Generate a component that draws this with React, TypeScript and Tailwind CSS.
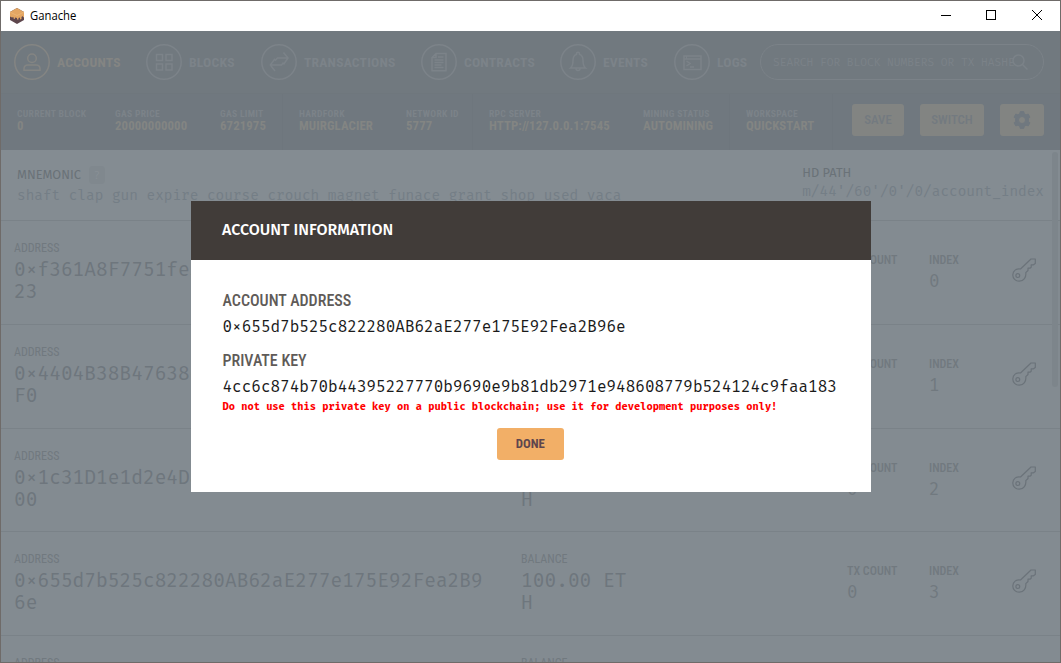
import type { ReactNode } from 'react';
import { clsx } from 'clsx';

interface NavItem {
  label: string;
  icon: ReactNode;
  width: string;
  active?: boolean;
}

interface Account {
  address: string;
  index: number;
  height: string;
}

const condensed = "font-['Roboto_Condensed','Roboto',sans-serif] [font-stretch:75%]";
const mono = "font-['Fira_Mono','Liberation_Mono',monospace]";
const sans = "font-['Fira_Sans','Open_Sans',sans-serif]";

const navItems: NavItem[] = [
  {
    label: 'ACCOUNTS',
    width: 'w-[132px]',
    active: true,
    icon: (
      <>
        <circle cx="18" cy="14.3" r="4.3" />
        <path d="M10 26.2v-1.4c0-2.4 1.6-3.8 4-3.8h8c2.4 0 4 1.4 4 3.8v1.4z" />
      </>
    ),
  },
  {
    label: 'BLOCKS',
    width: 'w-[115px]',
    icon: (
      <>
        <rect x="10.5" y="10.5" width="6" height="6" />
        <rect x="20" y="10.5" width="6" height="6" />
        <rect x="10.5" y="20" width="6" height="6" />
        <rect x="20" y="20" width="6" height="6" />
      </>
    ),
  },
  {
    label: 'TRANSACTIONS',
    width: 'w-[160px]',
    icon: <path d="M22.5 8.5L27 14l-4.5 6.5M27 14H16.5L14 16.7M14 14.7L9.3 21l4.7 6M9.3 21h11.2l2-2.5" />,
  },
  {
    label: 'CONTRACTS',
    width: 'w-[139px]',
    icon: <path d="M11 13.5v13.2h14V9.5H15zM11 13.5h4v-4M13.5 16h9M13.5 18.5h9M13.5 21h7M13.5 23.5h9M17 13h5.5" />,
  },
  {
    label: 'EVENTS',
    width: 'w-[114px]',
    icon: <path d="M10.5 24c2.5-2 2.5-4 2.5-7.5 0-3.5 1.5-5.5 3.5-6v-1c0-1.6 3-1.6 3 0v1c2 .5 3.5 2.5 3.5 6 0 3.5 0 5.5 2.5 7.5zM16 24.5c0 2.7 4 2.7 4 0" />,
  },
  {
    label: 'LOGS',
    width: 'w-[86px]',
    icon: <path d="M10 12h17v13.5H10zM10 15h17M12 13.5h1M12.5 17l3.5 2.5-3.5 2.5M16 23h4" />,
  },
];

const stats = [
  { label: 'CURRENT BLOCK', value: '0', width: 'w-[98px]' },
  { label: 'GAS PRICE', value: '20000000000', width: 'w-[105px]' },
  { label: 'GAS LIMIT', value: '6721975', width: 'w-[79px]', border: true },
  { label: 'HARDFORK', value: 'MUIRGLACIER', width: 'w-[107px]' },
  { label: 'NETWORK ID', value: '5777', width: 'w-[83px]', border: true },
  { label: 'RPC SERVER', value: 'HTTP://127.0.0.1:7545', width: 'w-[154px]' },
  { label: 'MINING STATUS', value: 'AUTOMINING', width: 'w-[103px]', border: true },
  { label: 'WORKSPACE', value: 'QUICKSTART', width: 'w-[103px]', border: true },
];

const accounts: Account[] = [
  { address: '0×f361A8F7751fe3a2B4c8E9d0176fAb52cD84E123', index: 0, height: 'h-[104px]' },
  { address: '0×4404B38B47638e5dA1c7F90b32E64aD8c15Be9F0', index: 1, height: 'h-[104px]' },
  { address: '0×1c31D1e1d2e4D8b7F05a93Ec6142dB78fA90c300', index: 2, height: 'h-[103px]' },
  { address: '0×655d7b525c822280AB62aE277e175E92Fea2B96e', index: 3, height: 'h-[104px]' },
  { address: '', index: 4, height: 'h-[104px]' },
];

function GanacheLogo() {
  return (
    <svg viewBox="0 0 14 16" className="h-4 w-3.5">
      <path d="M7 0l7 4v8l-7 4-7-4V4z" fill="#5e464d" />
      <path d="M7 0l7 4v5l-1 .5V8l-1.5 1v2l-1.5.5V9.5L8.5 10v1.5H7V10L5 9.500v1.500L3.500 10.500V9L2 9.500 0 8.500V4z" fill="#e4a663" />
      <path d="M0 4l7 3.5L14 4" fill="none" stroke="#f0bd80" strokeWidth=".6" />
    </svg>
  );
}

function TitleBar() {
  return (
    <div className="flex h-[30px] shrink-0 items-center bg-white pl-[9px] text-black">
      <GanacheLogo />
      <span className="ml-1.5 origin-left scale-x-[0.94] font-['Open_Sans',sans-serif] text-[12px]">Ganache</span>
      <svg className="-mr-px ml-auto h-[30px] w-[120px]" viewBox="0 0 120 30" fill="none" stroke="currentColor" shapeRendering="crispEdges">
        <path d="M0 14.5h10M45.5 9.5h9v9h-9z" />
        <path d="M91 9l10 10M101 9L91 19" shapeRendering="auto" />
      </svg>
    </div>
  );
}

function NavBar() {
  return (
    <nav className="flex h-[62px] items-center pl-[13px] pr-4">
      {navItems.map((item) => (
        <div
          key={item.label}
          className={clsx('flex shrink-0 items-center gap-[7px]', item.width, item.active ? 'text-[#848583]' : 'text-[#7c8389]')}
        >
          <svg viewBox="0 0 36 36" className="size-9 shrink-0" fill="none" stroke="currentColor" strokeWidth="1.5">
            <circle cx="18" cy="18" r="17.2" />
            {item.icon}
          </svg>
          <span className={clsx(condensed, 'text-[13.6px] font-bold tracking-[0.2px] whitespace-nowrap')}>{item.label}</span>
        </div>
      ))}
      <div className="flex h-9 min-w-0 flex-1 items-center rounded-full border border-[#7b8288] pl-3 text-[#7b8288]">
        <span className={clsx(mono, 'w-[241px] shrink-0 overflow-hidden pt-0.5 text-[11.2px] whitespace-nowrap')}>
          SEARCH FOR BLOCK NUMBERS OR TX HASHES
        </span>
        <svg viewBox="0 0 16 16" className="-ml-[2px] size-4 shrink-0" fill="none" stroke="currentColor" strokeWidth="1.5">
          <circle cx="6.5" cy="6.5" r="5.5" />
          <path d="M10.5 10.5l5 5" />
        </svg>
      </div>
    </nav>
  );
}

function ToolbarButton({ className, children }: { className: string; children: ReactNode }) {
  return (
    <button
      className={clsx(condensed, 'flex h-8 items-center justify-center rounded-[3px] bg-[#828482] text-[12.8px] font-medium text-[#737a80]', className)}
    >
      {children}
    </button>
  );
}

function StatusBar() {
  return (
    <div className="flex h-[57px] border-t border-[#6f777d] bg-[#70787f] pr-4">
      {stats.map((stat) => (
        <div
          key={stat.label}
          className={clsx(condensed, 'shrink-0 pt-3.5 pl-4 font-bold whitespace-nowrap', stat.width, stat.border && 'border-r border-[#6e767d]')}
        >
          <div className="text-[9.6px] leading-[11px] tracking-[0.3px] text-[#7c8389]">{stat.label}</div>
          <div className="text-[12.8px] leading-[14px] tracking-[0.1px] text-[#838583]">{stat.value}</div>
        </div>
      ))}
      <div className="ml-auto flex gap-4 pt-2.5">
        <ToolbarButton className="w-[52px]">SAVE</ToolbarButton>
        <ToolbarButton className="w-16">SWITCH</ToolbarButton>
        <ToolbarButton className="w-11">
          <svg viewBox="0 0 18 18" className="size-[18px]" fill="#70787f" stroke="#70787f" strokeLinejoin="round" fillRule="evenodd">
            <path d="M7.3.6h3.4l.6 2.2 1.8 1 2.1-.7 1.7 3-1.5 1.6v2.6l1.5 1.6-1.7 3-2.1-.7-1.8 1-.6 2.2H7.3l-.6-2.2-1.8-1-2.1.7-1.7-3 1.5-1.6V7.7L1.1 6.1l1.7-3 2.1.7 1.8-1zM9 5.5a3.5 3.5 0 100 7 3.5 3.5 0 000-7z" />
          </svg>
        </ToolbarButton>
      </div>
    </div>
  );
}

function MnemonicPanel() {
  return (
    <div className="flex h-[71px] shrink-0 justify-between border-b border-[#7a8288] bg-[#848c92] pr-4 pl-4">
      <div className="pt-[17px]">
        <div className="flex h-4 items-center gap-2">
          <span className={clsx(sans, 'text-[12.8px] text-[#6a7278]')}>MNEMONIC</span>
          <span className="flex h-[18px] w-4 items-center justify-center rounded bg-[#80888e] font-['Open_Sans',sans-serif] text-[11px] text-[#899096]">?</span>
        </div>
        <p className={clsx(mono, 'mt-1 text-[14.4px] leading-[18px] whitespace-nowrap text-[#747e86]')}>
          shaft clap gun expire course crouch magnet funace grant shop used vaca
        </p>
      </div>
      <div className="pt-[15px]">
        <div className={clsx(sans, 'h-4 text-[12.8px] leading-4 text-[#6a7278]')}>HD PATH</div>
        <p className={clsx(mono, 'mt-0.5 text-[14.4px] leading-[18px] whitespace-nowrap text-[#747e86]')}>m/44'/60'/0'/0/account_index</p>
      </div>
    </div>
  );
}

function KeyIcon() {
  return (
    <svg viewBox="0 0 24 24" className="size-6" fill="none" stroke="#6b737a" strokeWidth="1.2" strokeLinejoin="round">
      <path d="M8.500 11L19 1h4.300v4.500l-1.800 1.300h-2.300v2.400l-1.200 1h-2v2.300l-2.200 2.200c.5 4.500-2 8.500-6.500 8.500-3.800 0-6.500-2.700-6.500-6.200 0-4.200 3.500-6.800 7.700-6z" />
      <circle cx="5.8" cy="17.6" r="1.9" />
    </svg>
  );
}

function AccountRow({ account }: { account: Account }) {
  return (
    <div className={clsx('flex shrink-0 border-b border-[#7a8288] pl-[13px] text-[#71797f]', account.height)}>
      <div className="w-[507px] pt-5">
        <div className={clsx(condensed, 'text-[12px] leading-[14px]')}>ADDRESS</div>
        <div className={clsx(mono, 'mt-1 w-[475px] text-[19.55px] leading-[22px] break-all text-[#6e767d]')}>{account.address}</div>
      </div>
      <div className="w-[326px] pt-5">
        <div className={clsx(condensed, 'text-[12px] leading-[14px]')}>BALANCE</div>
        {account.address && (
          <div className={clsx(mono, 'mt-1 w-[112px] text-[19.55px] leading-[22px] break-all text-[#6e767d]')}>100.00 ETH</div>
        )}
      </div>
      {account.address && (
        <>
          <div className="w-[82px] pt-8">
            <div className={clsx(condensed, 'text-[12px] leading-[15px] font-medium')}>TX COUNT</div>
            <div className={clsx(mono, 'mt-1 text-[17.6px] leading-5')}>0</div>
          </div>
          <div className="w-[83px] pt-8">
            <div className={clsx(condensed, 'text-[12px] leading-[15px] font-medium')}>INDEX</div>
            <div className={clsx(mono, 'mt-1 text-[17.6px] leading-5')}>{account.index}</div>
          </div>
          <div className="pt-[37px]">
            <KeyIcon />
          </div>
        </>
      )}
    </div>
  );
}

function AccountModal() {
  return (
    <div className="absolute top-[200px] left-[190px] h-[291px] w-[680px] bg-white">
      <header className="flex h-[59px] items-center bg-[#413c39] px-[31px] pb-px">
        <h1 className={clsx(sans, 'text-[16px] font-medium text-white')}>ACCOUNT INFORMATION</h1>
      </header>
      <div className="flex flex-col pt-[30px] pr-[31px] pl-[31.5px] whitespace-nowrap">
        <h2 className={clsx(condensed, 'text-[16px] leading-[21px] font-medium text-[#5f5b58]')}>ACCOUNT ADDRESS</h2>
        <p className={clsx(mono, 'mt-[5px] text-[16px] leading-[22px] text-[#1a1a1a]')}>0×655d7b525c822280AB62aE277e175E92Fea2B96e</p>
        <h2 className={clsx(condensed, 'mt-3 text-[16px] leading-[21px] font-medium text-[#5f5b58]')}>PRIVATE KEY</h2>
        <p className={clsx(mono, 'mt-[5px] text-[16px] leading-[22px] text-[#1a1a1a]')}>
          4cc6c874b70b44395227770b9690e9b81db2971e948608779b524124c9faa183
        </p>
        <p className={clsx(mono, 'mt-0.5 text-[10.4px] leading-[14px] font-bold text-[#f00]')}>
          Do not use this private key on a public blockchain; use it for development purposes only!
        </p>
        <button className={clsx(condensed, 'mt-3.5 mr-0.5 h-8 w-[67px] self-center rounded-[3px] bg-[#f2af67] text-[12.8px] font-bold text-[#5e464d]')}>
          DONE
        </button>
      </div>
    </div>
  );
}

export default function App() {
  return (
    <div className="relative flex h-[663px] w-[1061px] flex-col overflow-hidden border border-[#6f6b69] bg-[#838b91]">
      <TitleBar />
      <div className="shrink-0 bg-[#71797f]">
        <NavBar />
        <StatusBar />
      </div>
      <div className="relative flex min-h-0 flex-1 flex-col overflow-hidden">
        <MnemonicPanel />
        {accounts.map((account) => (
          <AccountRow key={account.index} account={account} />
        ))}
        {/* scrollbar thumb */}
        <div className="absolute top-0.5 right-0.5 h-[235px] w-1.5 rounded-full bg-[#7d858b]" />
      </div>
      <AccountModal />
    </div>
  );
}
